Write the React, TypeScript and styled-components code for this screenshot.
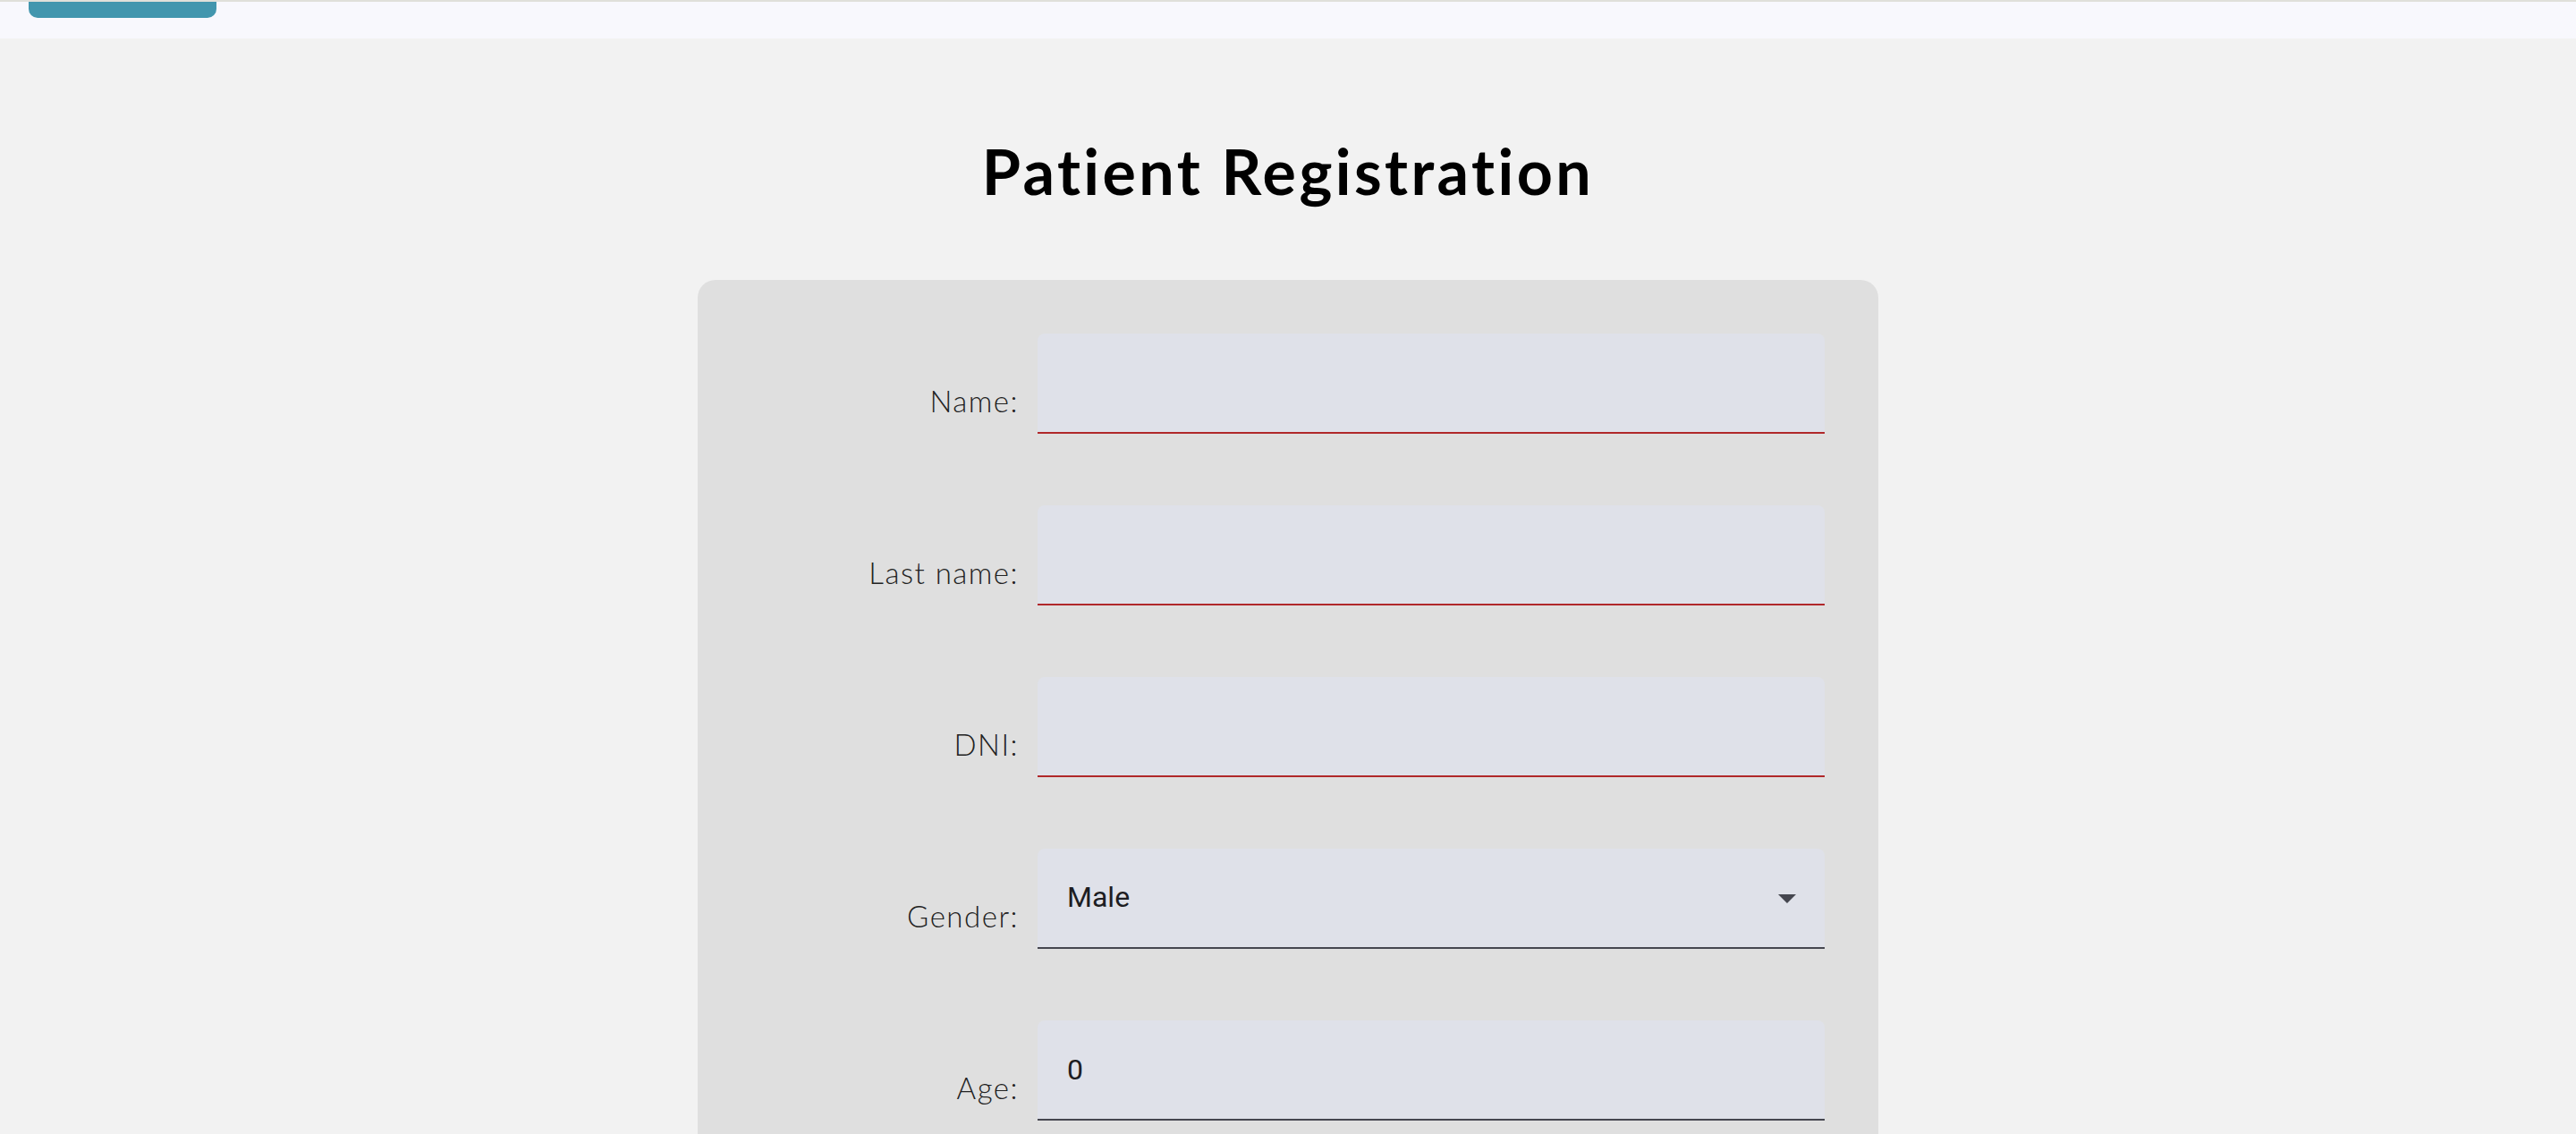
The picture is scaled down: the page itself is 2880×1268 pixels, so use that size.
import React from "react";
import styled, { createGlobalStyle } from "styled-components";

const Global = createGlobalStyle`
  html, body { margin: 0; padding: 0; background: #f2f2f2; }
  body { font-family: "Lato", "Noto Sans", sans-serif; }
  * { box-sizing: border-box; }
`;

const TopBar = styled.header`
  height: 43px;
  background: #f8f8fd;
  border-top: 2px solid #e0e0da;
  padding-left: 32px;
`;

const NavButton = styled.button`
  display: block;
  width: 210px;
  height: 18px;
  border: none;
  padding: 0;
  background: #4296ae;
  border-radius: 0 0 10px 10px;
`;

const Main = styled.main`
  display: flex;
  flex-direction: column;
  align-items: center;
  padding-top: 113px;
`;

const Title = styled.h1`
  margin: 0 0 87px;
  font-family: "Lato", sans-serif;
  font-weight: 700;
  font-size: 70px;
  line-height: 1;
  color: #000;
  letter-spacing: 3.4px;
`;

const Card = styled.form`
  width: 1320px;
  background: #dfdfdf;
  border-radius: 20px;
  padding: 60px 60px 80px;
  display: flex;
  flex-direction: column;
  gap: 80px;
`;

const Row = styled.div`
  display: flex;
  align-items: flex-end;
  gap: 21px;
`;

const Label = styled.label`
  flex: 1;
  text-align: right;
  font-family: "Lato", sans-serif;
  font-weight: 300;
  font-size: 33px;
  line-height: 1;
  letter-spacing: 1.5px;
  color: #222;
  padding-bottom: 20px;
`;

const Field = styled.div<{ $error?: boolean }>`
  width: 880px;
  height: 112px;
  background: #dfe1e9;
  border-radius: 8px 8px 0 0;
  border-bottom: 2px solid ${(p) => (p.$error ? "#b0282a" : "#45464f")};
  display: flex;
  align-items: center;
  padding: 0 32px 0 33px;
`;

const TextInput = styled.input`
  flex: 1;
  height: 100%;
  border: none;
  outline: none;
  background: transparent;
  padding: 0;
  font-family: "Roboto", sans-serif;
  font-size: 32px;
  color: #1d1d22;
`;

const SelectValue = styled.span`
  flex: 1;
  font-family: "Roboto", sans-serif;
  font-size: 32px;
  color: #1d1d22;
  margin-top: -2px;
`;

const Arrow = () => (
  <svg width="20" height="10" viewBox="0 0 20 10" style={{ display: "block", marginTop: "2px" }}>
    <path d="M0 0 L20 0 L10 10 Z" fill="#45464f" />
  </svg>
);

export default function App() {
  return (
    <>
      <Global />
      <TopBar>
        <NavButton aria-label="menu" />
      </TopBar>
      <Main>
        <Title>Patient Registration</Title>
        <Card>
          <Row>
            <Label>Name:</Label>
            <Field $error>
              <TextInput />
            </Field>
          </Row>
          <Row>
            <Label>Last name:</Label>
            <Field $error>
              <TextInput />
            </Field>
          </Row>
          <Row>
            <Label>DNI:</Label>
            <Field $error>
              <TextInput />
            </Field>
          </Row>
          <Row>
            <Label>Gender:</Label>
            <Field>
              <SelectValue>Male</SelectValue>
              <Arrow />
            </Field>
          </Row>
          <Row>
            <Label>Age:</Label>
            <Field>
              <TextInput defaultValue="0" />
            </Field>
          </Row>
        </Card>
      </Main>
    </>
  );
}
